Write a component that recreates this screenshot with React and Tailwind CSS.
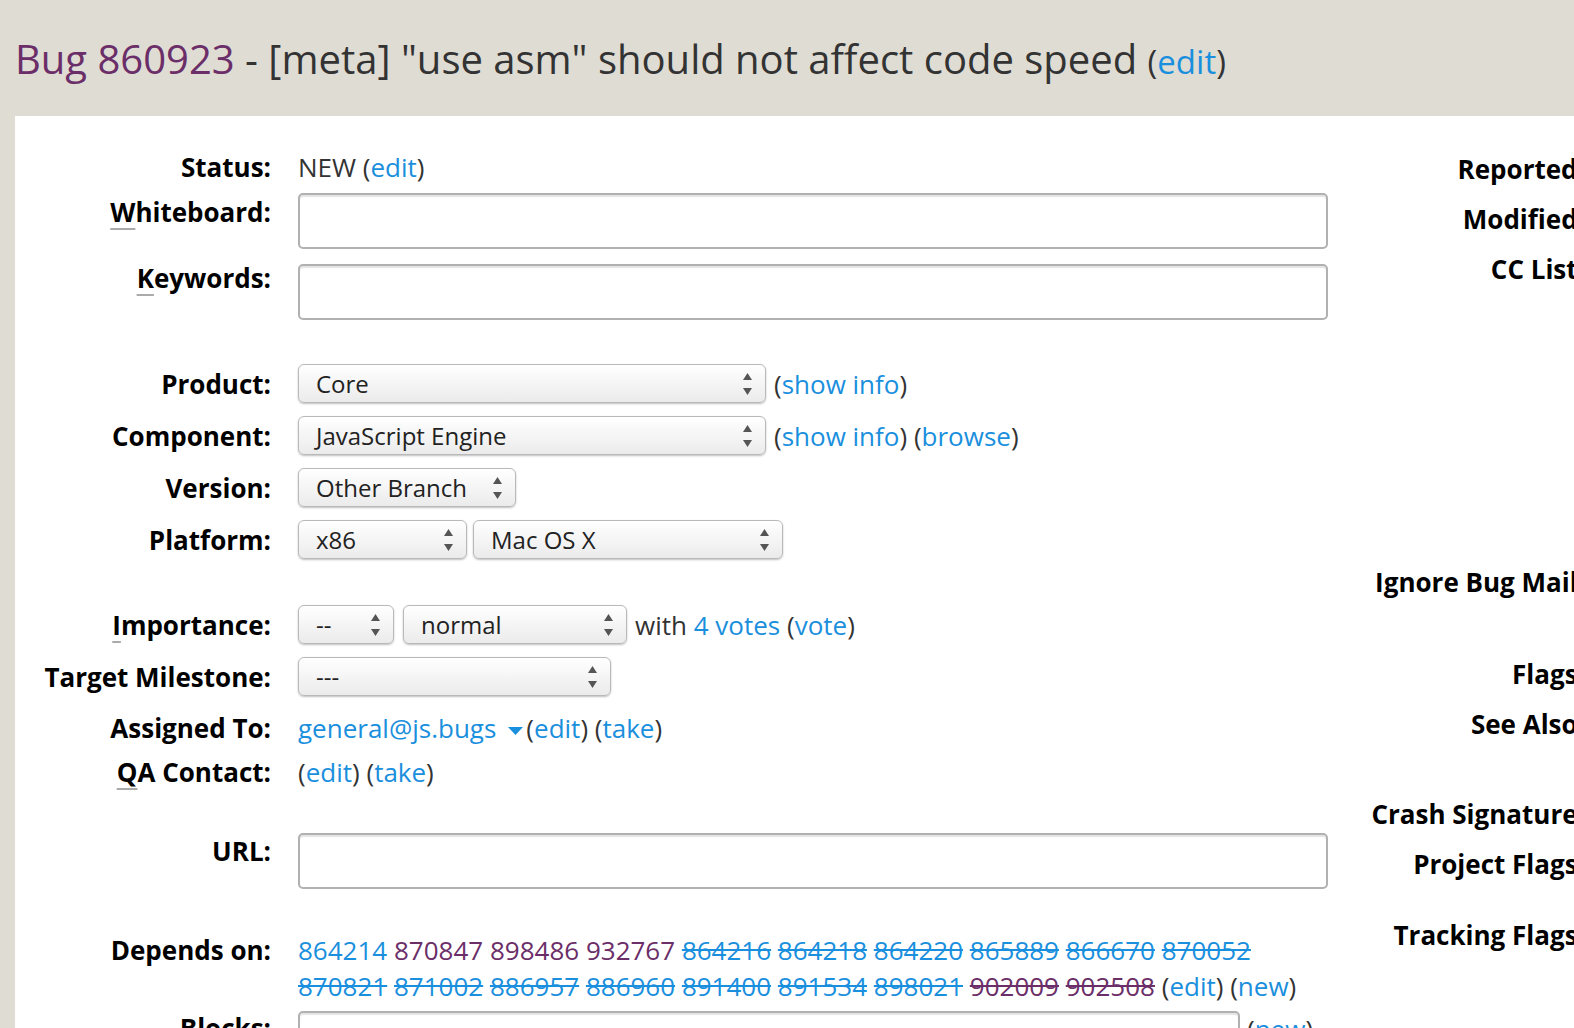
const BLUE = "text-[#1a8fdd]"
const PURPLE = "text-[#6b2e68]"

function Arrows() {
  return (
    <svg width="9" height="22" viewBox="0 0 9 22" className="shrink-0">
      <polygon points="4.5,0 9,7 0,7" fill="#555" />
      <polygon points="0,15 9,15 4.5,22" fill="#555" />
    </svg>
  )
}

function Select({ value, width }) {
  return (
    <div
      className={`flex h-[39px] shrink-0 items-center justify-between rounded-[6px] border border-[#b9b9b9] bg-linear-to-b from-white to-[#ebebeb] pl-[17px] pr-[13px] text-[24px] text-[#222] shadow-[0_1px_2px_rgba(0,0,0,0.25)] ${width}`}
    >
      <span className="leading-none">{value}</span>
      <Arrows />
    </div>
  )
}

function TextBox({ width = "w-[1030px]" }) {
  return (
    <div
      className={`h-[56px] shrink-0 rounded-[5px] border-2 border-[#b1b1b1] bg-white shadow-[inset_0_2px_1px_#e4e4e4] ${width}`}
    />
  )
}

function Paren({ children, className = BLUE }) {
  return (
    <span className="text-[#333]">
      (<a className={className}>{children}</a>)
    </span>
  )
}

function Key({ children }) {
  return (
    <span className="underline decoration-[#aaa] decoration-2 underline-offset-[6px]">{children}</span>
  )
}

function Row({ label, children, className = "", align = "items-start", labelClass = "" }) {
  return (
    <div className={`flex ${align} ${className}`}>
      <div
        className={`w-[256px] shrink-0 whitespace-nowrap text-right text-[26px] leading-[36px] font-bold text-black ${labelClass}`}
      >
        {label}
      </div>
      <div className="ml-[27px] flex items-center gap-[8px] text-[26px] leading-[36px] text-[#333]">
        {children}
      </div>
    </div>
  )
}

function Bug({ id, visited, closed }) {
  return (
    <a className={`${visited ? PURPLE : BLUE} ${closed ? "line-through" : ""}`}>{id}</a>
  )
}

const line1 = [
  ["864214", false, false],
  ["870847", true, false],
  ["898486", true, false],
  ["932767", true, false],
  ["864216", false, true],
  ["864218", false, true],
  ["864220", false, true],
  ["865889", false, true],
  ["866670", false, true],
  ["870052", false, true],
]

const line2 = [
  ["870821", false, true],
  ["871002", false, true],
  ["886957", false, true],
  ["886960", false, true],
  ["891400", false, true],
  ["891534", false, true],
  ["898021", false, true],
  ["902009", true, true],
  ["902508", true, true],
]

function SideLabel({ children, className }) {
  return (
    <div className={`whitespace-nowrap text-[26px] leading-[36px] font-bold text-black ${className}`}>{children}</div>
  )
}

export default function App() {
  return (
    <div className="flex h-screen w-screen flex-col overflow-hidden bg-[#dfdcd4] font-['Open_Sans',sans-serif]">
      <h1 className="h-[116px] shrink-0 whitespace-nowrap pl-[15px] pt-[35px] text-[40px] leading-[48px] font-normal text-[#333]">
        <a className={PURPLE}>Bug 860923</a> - [meta] "use asm" should not affect code speed{" "}
        <span className="text-[33px] leading-none">
          <Paren>edit</Paren>
        </span>
      </h1>

      <div className="ml-[15px] flex flex-1 bg-white">
        {/* left: main fields */}
        <div className="w-[1332px] shrink-0 pt-[33px]">
          <Row label="Status:">
            <span>
              NEW <Paren>edit</Paren>
            </span>
          </Row>

          <Row label={<><Key>W</Key>hiteboard:</>} className="mt-[8px]" labelClass="mt-px">
            <TextBox />
          </Row>

          <Row label={<><Key>K</Key>eywords:</>} className="mt-[15px]" labelClass="-mt-[4px]">
            <TextBox />
          </Row>

          <Row label="Product:" className="mt-[44px]" align="items-center">
            <Select value="Core" width="w-[468px]" />
            <span>
              <Paren>show info</Paren>
            </span>
          </Row>

          <Row label="Component:" className="mt-[13px]" align="items-center">
            <Select value="JavaScript Engine" width="w-[468px]" />
            <span>
              <Paren>show info</Paren> <Paren>browse</Paren>
            </span>
          </Row>

          <Row label="Version:" className="mt-[13px]" align="items-center">
            <Select value="Other Branch" width="w-[218px]" />
          </Row>

          <Row label="Platform:" className="mt-[13px]" align="items-center">
            <div className="flex gap-[6px]">
              <Select value="x86" width="w-[169px]" />
              <Select value="Mac OS X" width="w-[310px]" />
            </div>
          </Row>

          <Row label={<><Key>I</Key>mportance:</>} className="mt-[46px]" align="items-center">
            <div className="flex gap-[9px]">
              <Select value="--" width="w-[96px]" />
              <Select value="normal" width="w-[224px]" />
            </div>
            <span>
              with <a className={BLUE}>4 votes</a> <Paren>vote</Paren>
            </span>
          </Row>

          <Row label="Target Milestone:" className="mt-[13px]" align="items-center">
            <Select value="---" width="w-[313px]" />
          </Row>

          <Row label="Assigned To:" className="mt-[14px]">
            <span className="flex items-center">
              <a className={BLUE}>general@js.bugs</a>
              <svg width="15" height="8" viewBox="0 0 15 8" className="ml-[12px] mr-[3px] mt-[6px]">
                <polygon points="0,0 15,0 7.5,8" fill="#1a8fdd" />
              </svg>
              <Paren>edit</Paren>
              <span>&nbsp;</span>
              <Paren>take</Paren>
            </span>
          </Row>

          <Row label={<><Key>Q</Key>A Contact:</>} className="mt-[8px]">
            <span>
              <Paren>edit</Paren> <Paren>take</Paren>
            </span>
          </Row>

          <Row label="URL:" className="mt-[43px]">
            <TextBox />
          </Row>

          <Row label="Depends on:" className="mt-[43px]">
            <div className="whitespace-nowrap">
              {line1.map(([id, v, c], i) => (
                <span key={id}>
                  {i > 0 && " "}
                  <Bug id={id} visited={v} closed={c} />
                </span>
              ))}
              <br />
              {line2.map(([id, v, c], i) => (
                <span key={id}>
                  {i > 0 && " "}
                  <Bug id={id} visited={v} closed={c} />
                </span>
              ))}{" "}
              <Paren>edit</Paren> <Paren>new</Paren>
            </div>
          </Row>

          <Row label="Blocks:" className="mt-[7px]" labelClass="-mt-px">
            <div className="flex items-start gap-[7px]">
              <TextBox width="w-[942px]" />
              <Paren>new</Paren>
            </div>
          </Row>
        </div>

        {/* right: people / flags column, runs past the window edge */}
        <div className="w-[238px] shrink-0 pt-[35px] text-right">
          <SideLabel>Reported:</SideLabel>
          <SideLabel className="mt-[14px]">Modified:</SideLabel>
          <SideLabel className="mt-[14px]">CC List:</SideLabel>
          <SideLabel className="mt-[277px]">Ignore Bug Mail:</SideLabel>
          <SideLabel className="mt-[56px]">Flags:</SideLabel>
          <SideLabel className="mt-[14px]">See Also:</SideLabel>
          <SideLabel className="mt-[54px]">Crash Signature:</SideLabel>
          <SideLabel className="mt-[14px]">Project Flags:</SideLabel>
          <SideLabel className="mt-[35px]">Tracking Flags:</SideLabel>
        </div>
      </div>
    </div>
  )
}
